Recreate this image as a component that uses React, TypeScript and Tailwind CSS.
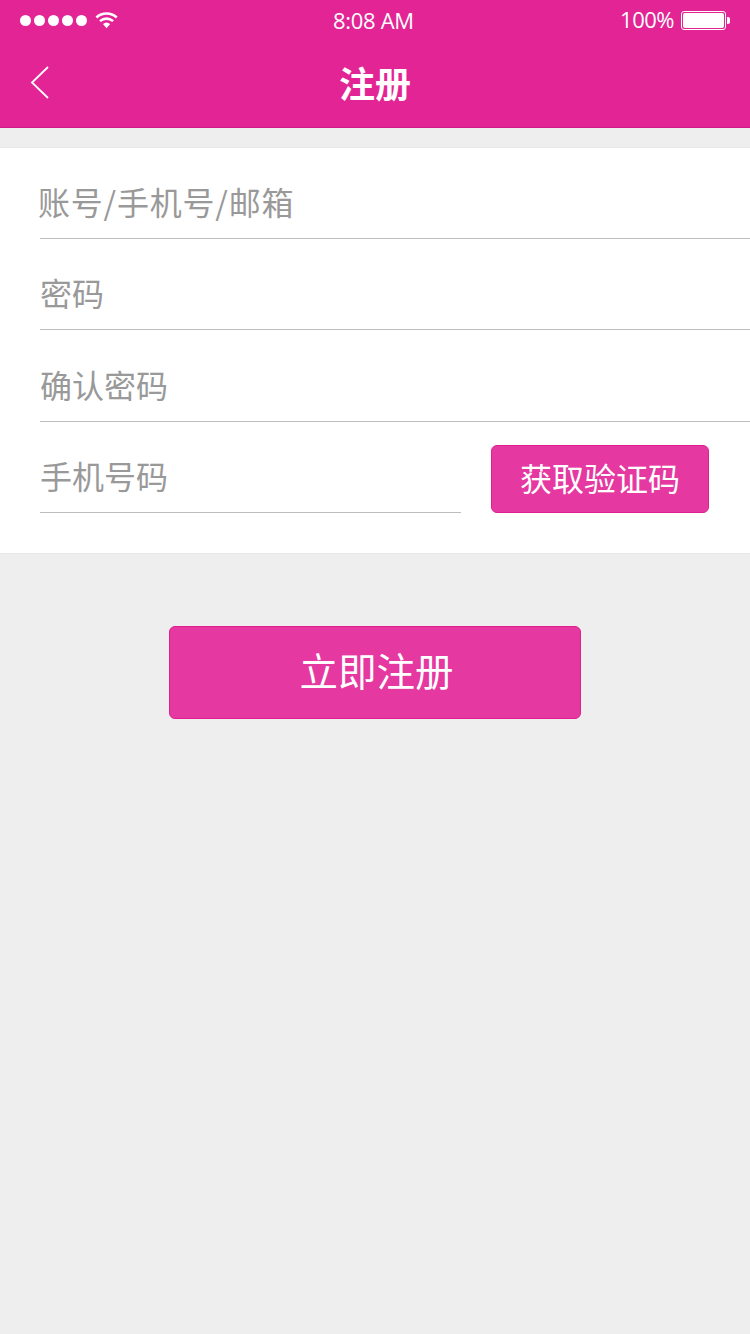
import React from "react";

const cjk = "font-['Noto_Sans_CJK_SC','Noto_Sans',sans-serif]";

function Wifi() {
  return (
    <svg width="24" height="20" viewBox="0 0 26 20" className="ml-[5px]">
      <path d="M1.5 7.2C7.8 1.6 17.2 1.6 23.5 7.2" fill="none" stroke="#fff" strokeWidth="2.8" />
      <path d="M5.4 11.2C9.6 7.6 15.4 7.6 19.6 11.2" fill="none" stroke="#fff" strokeWidth="2.8" />
      <path d="M8.6 14.4C11.2 12.2 13.8 12.2 16.4 14.4L12.5 19Z" fill="#fff" />
    </svg>
  );
}

function Battery() {
  return (
    <div className="flex items-center">
      <div className="flex h-[19px] w-[45px] rounded-[3px] border border-white p-[1px]">
        <div className="flex-1 rounded-[2px] bg-white" />
      </div>
      <div className="ml-[1px] h-[7px] w-[3px] rounded-r-[2px] bg-white" />
    </div>
  );
}

function Field({ label, className, textClass = "" }: { label: string; className: string; textClass?: string }) {
  return (
    <div className={`flex items-center border-b border-[#bdbdbd] pt-[16px] text-[32px] leading-none text-[#999999] ${className}`}>
      <span className={textClass}>{label}</span>
    </div>
  );
}

export default function App() {
  return (
    <div className={`flex min-h-[1334px] w-[750px] flex-col bg-[#eeeeee] ${cjk}`}>
      <header className="h-[128px] border-b border-[#d01b85] bg-[#e32495] text-white">
        <div className="relative flex h-[40px] items-center justify-between pl-[20px] pr-[20px] font-['Open_Sans',sans-serif] text-[22px] font-normal">
          <div className="flex items-center">
            {[0, 1, 2, 3, 4].map((i) => (
              <span key={i} className="mr-[3px] h-[11px] w-[11px] rounded-full bg-white" />
            ))}
            <Wifi />
          </div>
          <span className="absolute left-[333px] top-[6px] leading-[28px] tracking-[-0.3px]">8:08 AM</span>
          <div className="flex items-center gap-[7px]">
            <span className="-mt-[1px] tracking-[-0.5px]">100%</span>
            <Battery />
          </div>
        </div>
        <div className="relative flex h-[87px] items-center justify-center pb-[3px]">
          <svg width="20" height="36" viewBox="0 0 20 36" className="absolute left-[30px] top-[25px]">
            <path d="M18 2 2 17.5 18 33" fill="none" stroke="#fff" strokeWidth="1.8" />
          </svg>
          <h1 className="text-[36px] font-bold leading-none">注册</h1>
        </div>
      </header>

      <main className="mt-[20px] bg-white pb-[40px] pl-[40px] shadow-[0_1px_0_#e8e8e8,0_-1px_0_#e8e8e8]">
        <Field label="账号/手机号/邮箱" className="h-[91px]" textClass="-ml-[2px] tracking-[0.8px]" />
        <Field label="密码" className="h-[91px]" />
        <Field label="确认密码" className="h-[92px]" />
        <div className="flex h-[91px] items-end">
          <Field label="手机号码" className="h-[91px] w-[421px]" />
          <button className="ml-[30px] h-[68px] w-[218px] rounded-[6px] border border-[#e01f8f] bg-[#e538a0] pb-[4px] text-[32px] leading-none text-white">
            获取验证码
          </button>
        </div>
      </main>

      <div className="mt-[73px] flex justify-center">
        <button className="h-[93px] w-[412px] rounded-[6px] border border-[#e01f8f] bg-[#e538a0] pb-[6px] pl-[3px] text-[38.5px] leading-none text-white">
          立即注册
        </button>
      </div>
    </div>
  );
}
